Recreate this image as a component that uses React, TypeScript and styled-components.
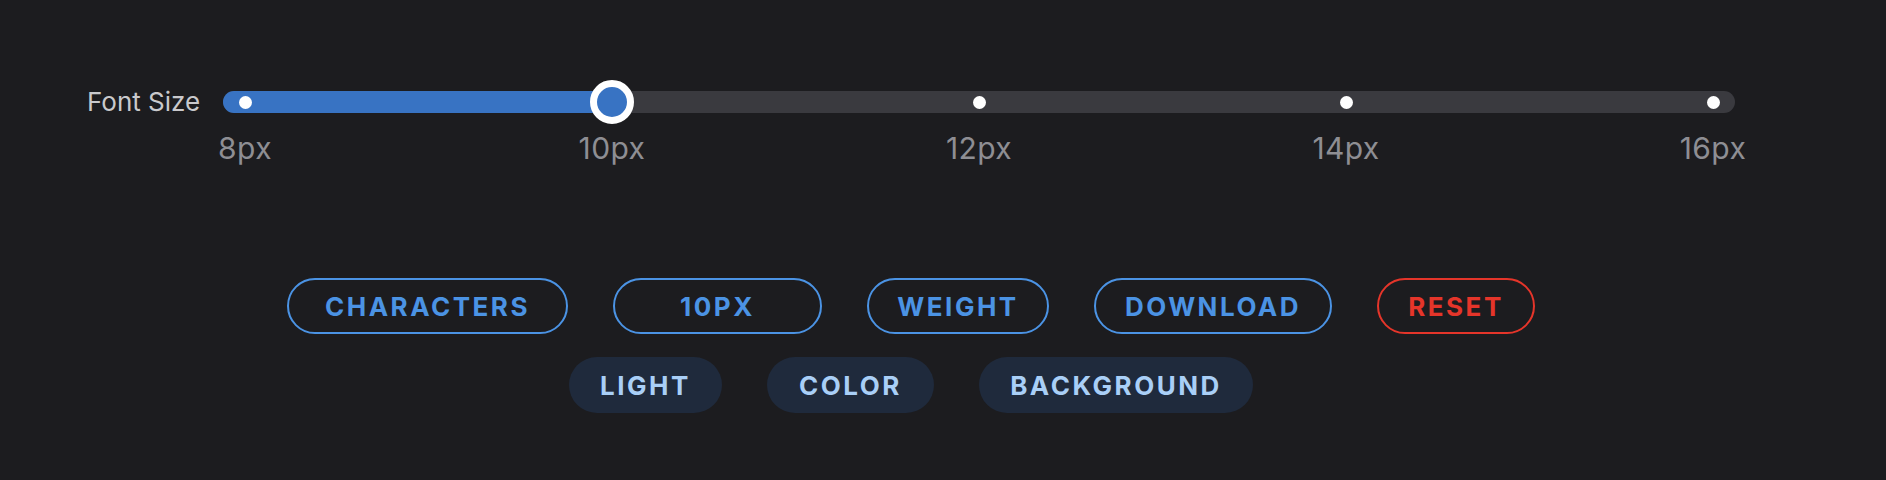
import styled, { createGlobalStyle } from 'styled-components';

const GlobalStyle = createGlobalStyle`
    html, body {
        margin: 0;
        padding: 0;
        background: #1c1c1f;
    }
    body {
        font-family: Inter, "Noto Sans", "Liberation Sans", sans-serif;
    }
`;

const Page = styled.div`
    width: 1886px;
    height: 480px;
    background: #1c1c1f;
    padding: 80px 0 0 87px;
    box-sizing: border-box;
`;

const Content = styled.div`
    width: 1648px;
`;

const SliderRow = styled.div`
    display: flex;
    align-items: flex-start;
    gap: 24px;
`;

const Label = styled.span`
    width: 112px;
    color: #c9c9cc;
    font-size: 26px;
    line-height: 44px;
    white-space: nowrap;
`;

const SliderCol = styled.div`
    flex: 1;
`;

const TrackWrap = styled.div`
    position: relative;
    height: 44px;
`;

const Track = styled.div`
    position: absolute;
    left: 0;
    right: 0;
    top: 11px;
    height: 22px;
    border-radius: 11px;
    background: #3a3a3f;
    overflow: hidden;
`;

const Fill = styled.div`
    height: 100%;
    background: #3873c3;
`;

const Dots = styled.div`
    position: absolute;
    inset: 0 15.5px;
    display: flex;
    align-items: center;
    justify-content: space-between;
`;

const Dot = styled.span`
    width: 13px;
    height: 13px;
    border-radius: 50%;
    background: #ffffff;
`;

const Thumb = styled.div`
    position: absolute;
    top: 0;
    width: 44px;
    height: 44px;
    box-sizing: border-box;
    border-radius: 50%;
    border: 7.5px solid #ffffff;
    background: #3873c3;
    transform: translateX(-22px);
`;

const Scale = styled.div`
    display: flex;
    justify-content: space-between;
    margin: 6px 22px 0;
`;

const Tick = styled.span`
    width: 0;
    display: flex;
    justify-content: center;
    color: #8e8e93;
    font-size: 30px;
    letter-spacing: 0.4px;
    line-height: 36px;
    white-space: nowrap;
`;

const Buttons = styled.div`
    display: flex;
    flex-direction: column;
    align-items: center;
    gap: 23px;
    margin-top: 112px;
`;

const ButtonRow = styled.div`
    display: flex;
    justify-content: center;
    gap: 45px;
`;

const Chip = styled.button<{ $w: number; $tone?: 'blue' | 'red' | 'soft' }>`
    width: ${(p) => p.$w}px;
    height: 56px;
    border-radius: 28px;
    box-sizing: border-box;
    font-family: Inter, "Noto Sans", "Liberation Sans", sans-serif;
    font-weight: 700;
    font-size: 26px;
    letter-spacing: 2.5px;
    text-transform: uppercase;
    padding: 0;
    cursor: pointer;
    background: ${(p) => (p.$tone === 'soft' ? '#1f2a3c' : 'transparent')};
    color: ${(p) =>
        p.$tone === 'red' ? '#e5352a' : p.$tone === 'soft' ? '#a9cff7' : '#4b93e4'};
    border: ${(p) =>
        p.$tone === 'soft'
            ? 'none'
            : `2px solid ${p.$tone === 'red' ? '#e5352a' : '#4b93e4'}`};
`;

const steps = ['8px', '10px', '12px', '14px', '16px'];
const value = 1;

const App = () => {
    const pct = value / (steps.length - 1);
    const pos = `calc(22px + (100% - 44px) * ${pct})`;
    return (
        <>
            <GlobalStyle />
            <Page>
                <Content>
                    <SliderRow>
                        <Label>Font Size</Label>
                        <SliderCol>
                            <TrackWrap>
                                <Track>
                                    <Fill style={{ width: pos }} />
                                </Track>
                                <Dots>
                                    {steps.map((s) => (
                                        <Dot key={s} />
                                    ))}
                                </Dots>
                                <Thumb style={{ left: pos }} />
                            </TrackWrap>
                            <Scale>
                                {steps.map((s) => (
                                    <Tick key={s}>{s}</Tick>
                                ))}
                            </Scale>
                        </SliderCol>
                    </SliderRow>
                    <Buttons>
                        <ButtonRow>
                            <Chip $w={281}>Characters</Chip>
                            <Chip $w={209}>10px</Chip>
                            <Chip $w={182}>Weight</Chip>
                            <Chip $w={238}>Download</Chip>
                            <Chip $w={158} $tone="red">Reset</Chip>
                        </ButtonRow>
                        <ButtonRow>
                            <Chip $w={153} $tone="soft">Light</Chip>
                            <Chip $w={167} $tone="soft">Color</Chip>
                            <Chip $w={274} $tone="soft">Background</Chip>
                        </ButtonRow>
                    </Buttons>
                </Content>
            </Page>
        </>
    );
};

export default App;
